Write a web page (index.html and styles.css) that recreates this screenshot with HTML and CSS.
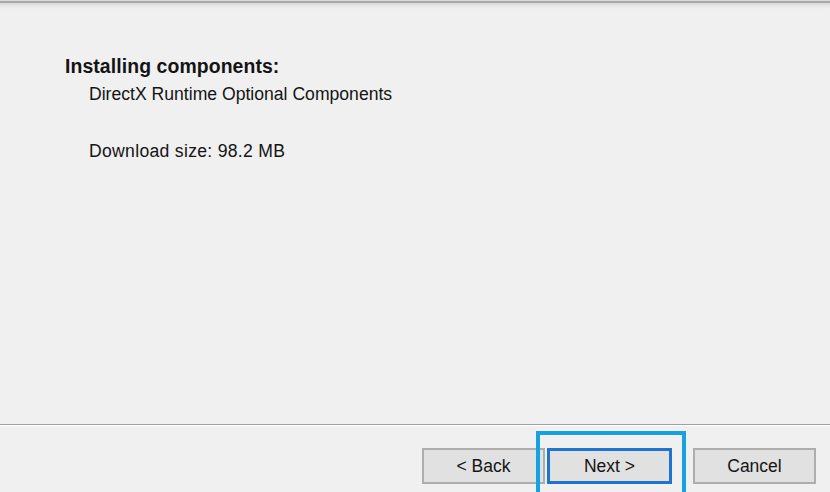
FILE: index.html
```html
<!DOCTYPE html>
<html>
<head>
<meta charset="utf-8">
<link rel="stylesheet" href="styles.css">
</head>
<body>
<div class="window">
  <div class="topline"></div>
  <main class="content">
    <h1 class="heading">Installing components:</h1>
    <p class="item">DirectX Runtime Optional Components</p>
    <p class="item size">Download size: 98.2 MB</p>
  </main>
  <div class="divider"></div>
  <footer class="footer">
    <div class="pair">
      <button class="btn">&lt; Back</button>
      <button class="btn btn-default">Next &gt;</button>
    </div>
    <button class="btn">Cancel</button>
  </footer>
</div>
</body>
</html>
```
FILE: styles.css
```css
html, body {
  margin: 0;
  padding: 0;
  background: #f0f0f0;
  overflow: hidden;
}
.window {
  width: 830px;
  height: 492px;
  display: flex;
  flex-direction: column;
  font-family: "Liberation Sans", Arial, sans-serif;
  color: #141414;
  overflow: hidden;
}
.topline {
  height: 9px;
  flex: none;
  background: linear-gradient(to bottom, #dadada 0, #dadada 1px, #a8a8a8 1px, #a8a8a8 3px, #d6d6d6 3px, #e8e8e8 6px, #f0f0f0 9px);
}
.content {
  flex: 1;
  padding: 44px 0 0 65px;
}
.heading {
  margin: 0;
  font-size: 19.4px;
  font-weight: bold;
  line-height: 27px;
  letter-spacing: 0.1px;
}
.item {
  margin: 0 0 0 24px;
  font-size: 17.6px;
  line-height: 28px;
}
.item.size {
  margin-top: 29px;
  letter-spacing: 0.3px;
}
.divider {
  flex: none;
  height: 0;
  border-top: 1px solid #a0a0a0;
  border-bottom: 1px solid #ffffff;
}
.footer {
  flex: none;
  height: 66px;
  box-sizing: border-box;
  display: flex;
  justify-content: flex-end;
  align-items: flex-start;
  padding: 22px 14px 0 0;
  gap: 21px;
}
.pair {
  display: flex;
  gap: 2px;
}
.btn {
  width: 123px;
  height: 36px;
  box-sizing: border-box;
  background: #e1e1e1;
  border: 2px solid #adadad;
  font-family: "Liberation Sans", Arial, sans-serif;
  font-size: 17.5px;
  color: #141414;
  padding: 0;
  margin: 0;
  border-radius: 0;
}
.btn-default {
  position: relative;
  width: 125px;
  border: 3px solid #1f74cf;
}
.btn-default::after {
  content: "";
  position: absolute;
  left: -14px;
  right: -17px;
  top: -20px;
  bottom: -16px;
  border: 4px solid #16a2e2;
}
```
